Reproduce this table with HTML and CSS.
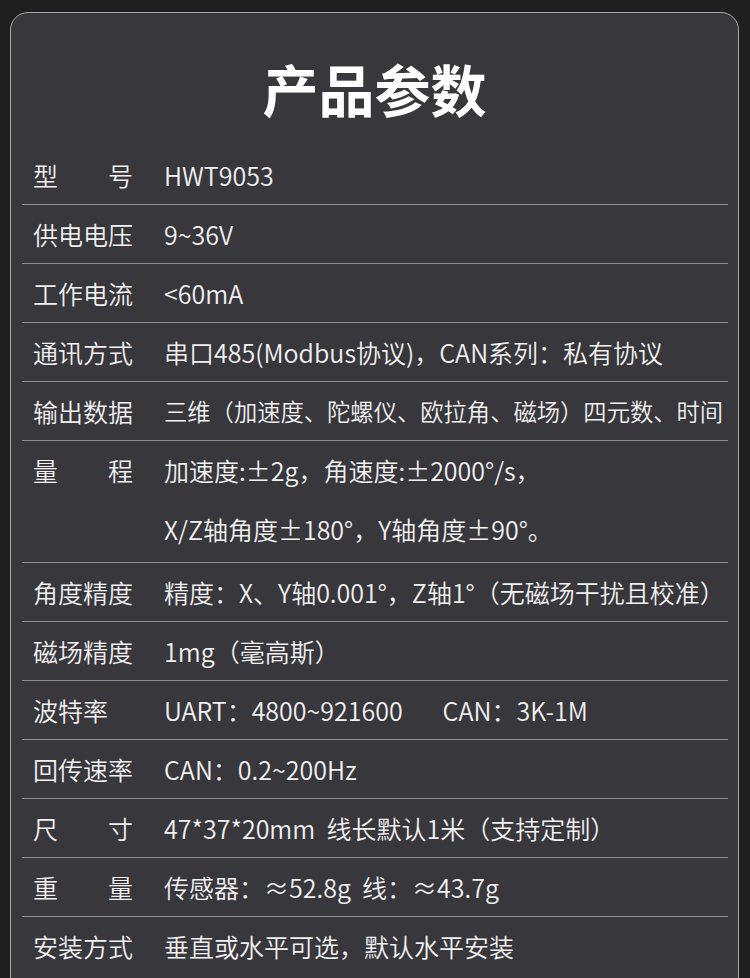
FILE: index.html
```html
<!DOCTYPE html>
<html lang="zh-CN">
<head>
    <meta charset="UTF-8" />
    <meta name="viewport" content="width=device-width, initial-scale=1.0" />
    <title>产品参数</title>
    <link rel="stylesheet" href="styles.css">
</head>
<body>
    <div class="card">
        <h1 class="title">产品参数</h1>

        <ul class="specs">
            <li class="row"><span class="label spread">型号</span><span class="value">HWT9053</span></li>
            <li class="row"><span class="label">供电电压</span><span class="value">9~36V</span></li>
            <li class="row"><span class="label">工作电流</span><span class="value">&lt;60mA</span></li>
            <li class="row"><span class="label">通讯方式</span><span class="value">串口485(Modbus协议)，CAN系列：私有协议</span></li>
            <li class="row"><span class="label">输出数据</span><span class="value compact">三维（加速度、陀螺仪、欧拉角、磁场）四元数、时间</span></li>
            <li class="row tall">
                <span class="label spread">量程</span>
                <span class="value">加速度:±2g，角速度:±2000°/s，<br>X/Z轴角度±180°，Y轴角度±90°。</span>
            </li>
            <li class="row"><span class="label">角度精度</span><span class="value">精度：X、Y轴0.001°，Z轴1°（无磁场干扰且校准）</span></li>
            <li class="row"><span class="label">磁场精度</span><span class="value">1mg（毫高斯）</span></li>
            <li class="row"><span class="label">波特率</span><span class="value">UART：4800~921600<span class="gap"></span>CAN：3K-1M</span></li>
            <li class="row"><span class="label">回传速率</span><span class="value">CAN：0.2~200Hz</span></li>
            <li class="row"><span class="label spread">尺寸</span><span class="value">47*37*20mm&nbsp; 线长默认1米（支持定制）</span></li>
            <li class="row"><span class="label spread">重量</span><span class="value">传感器：≈52.8g&nbsp; 线：≈43.7g</span></li>
            <li class="row"><span class="label">安装方式</span><span class="value">垂直或水平可选，默认水平安装</span></li>
        </ul>
    </div>
</body>
</html>
```

FILE: styles.css
```css
/* Basic reset */
* {
    margin: 0;
    padding: 0;
    box-sizing: border-box;
}

body {
    font-family: "Noto Sans CJK SC", "Noto Sans", sans-serif;
    color: #f0f0f0;
    background-color: #1f1f1f;
    padding: 12px 11px 0 10px;
    height: 978px;
    overflow: hidden;
}

/* Dark card with thin light border */
.card {
    background-color: #38373c;
    border: 1px solid #a8a8a8;
    border-radius: 18px;
    min-height: 1000px;
}

.title {
    font-size: 56px;
    font-weight: 700;
    color: #ffffff;
    text-align: center;
    line-height: 72px;
    padding: 39px 0 22px;
}

/* Parameter rows */
.specs {
    list-style: none;
    margin: 0 10px 0 11px;
}

.row {
    display: flex;
    align-items: flex-start;
    padding-left: 11px;
    font-size: 25px;
    font-weight: 350;
    line-height: 58px;
    border-bottom: 1px solid #8e8e8e;
}

.row:last-child {
    border-bottom: none;
}

.row.tall {
    line-height: 59px;
    padding-bottom: 3px;
}

.label {
    width: 100px;
    flex-shrink: 0;
    margin-right: 31px;
    white-space: nowrap;
}

/* Two-character labels are stretched over four characters */
.label.spread {
    text-align: justify;
    text-align-last: justify;
}

.value {
    white-space: nowrap;
}

/* The long output row is squeezed to fit the card */
.value.compact {
    font-size: 23.3px;
}

.gap {
    display: inline-block;
    width: 40px;
}
```
